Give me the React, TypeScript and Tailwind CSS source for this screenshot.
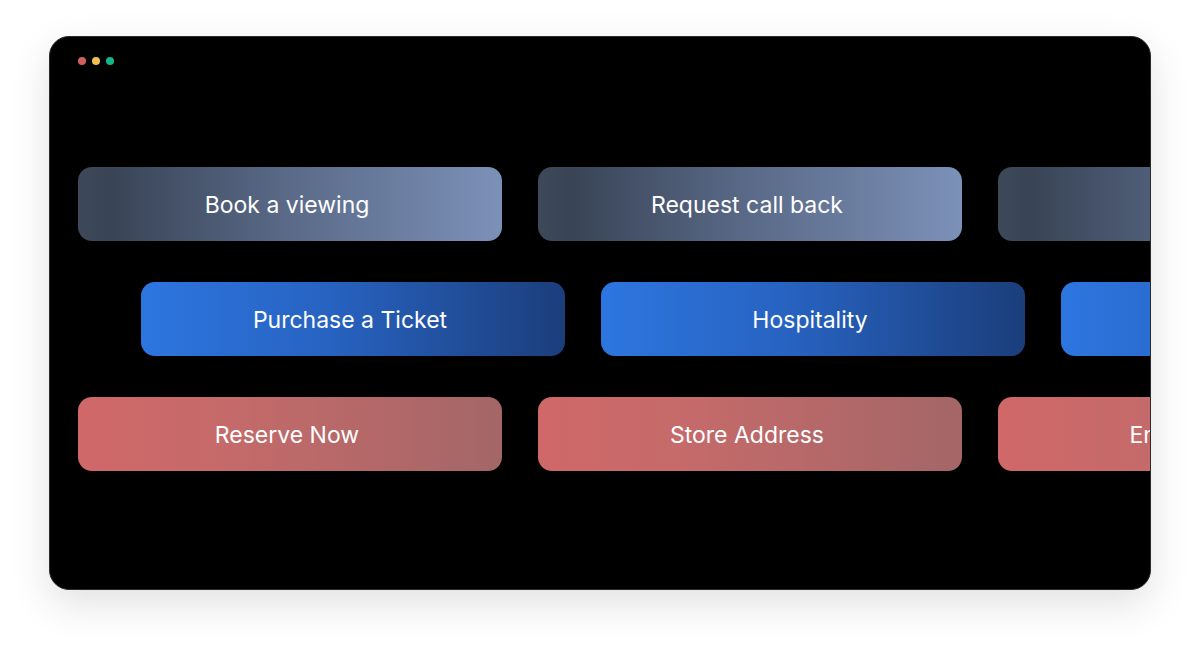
// App.tsx
const rows = [
  {
    offset: "pl-[28px]",
    gradient: "bg-[linear-gradient(90deg,#3d4859_0%,#394456_8%,#5a6a88_50%,#7c91b8_100%)]",
    items: ["Book a viewing", "Request call back", "Call us"],
  },
  {
    offset: "pl-[91px]",
    gradient: "bg-[linear-gradient(90deg,#2d76e0_0%,#2762c0_45%,#1b3e7b_100%)]",
    items: ["Purchase a Ticket", "Hospitality", "Shop Now"],
  },
  {
    offset: "pl-[28px]",
    gradient: "bg-[linear-gradient(90deg,#d06868_0%,#c56a6a_35%,#a46667_100%)]",
    items: ["Reserve Now", "Store Address", "Enquire Today"],
  },
];

const App = () => {
  return (
    <div className="h-[652px] w-[1200px] bg-white pt-[36px] pl-[49px] font-['Inter','Noto_Sans',sans-serif]">
      <div className="h-[554px] w-[1102px] overflow-hidden rounded-[20px] border-[1.5px] border-[#2b2b2b] bg-black shadow-[0_14px_40px_rgba(0,0,0,0.12)]">
        <div className="flex gap-[6px] pl-[28px] pt-[20px]">
          <span className="h-[8px] w-[8px] rounded-full bg-[#d0605f]" />
          <span className="h-[8px] w-[8px] rounded-full bg-[#f3bf4e]" />
          <span className="h-[8px] w-[8px] rounded-full bg-[#12b58c]" />
        </div>
        <div className="mt-[102px] flex flex-col gap-[41px]">
          {rows.map((row, i) => (
            <div key={i} className={`flex gap-[36px] ${row.offset}`}>
              {row.items.map((label) => (
                <button
                  key={label}
                  className={`flex h-[74px] w-[424px] shrink-0 items-center justify-center rounded-[14px] pt-[2px] pr-[6px] text-[23px] font-normal text-white ${row.gradient}`}
                >
                  {label}
                </button>
              ))}
            </div>
          ))}
        </div>
      </div>
    </div>
  );
};

export default App;
